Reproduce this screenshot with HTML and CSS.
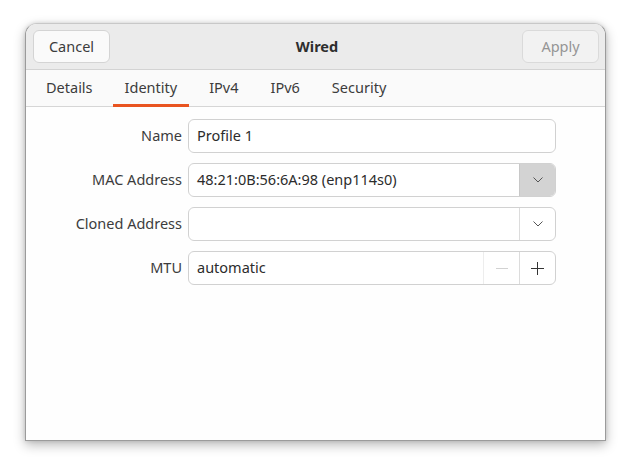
FILE: index.html
```html
<!DOCTYPE html>
<html>
<head>
<meta charset="utf-8">
<link rel="stylesheet" href="styles.css">
</head>
<body>
<div class="window">
  <header class="headerbar">
    <button class="btn">Cancel</button>
    <div class="title">Wired</div>
    <button class="btn btn-disabled">Apply</button>
  </header>
  <nav class="tabs">
    <div class="tab">Details</div>
    <div class="tab active">Identity</div>
    <div class="tab">IPv4</div>
    <div class="tab">IPv6</div>
    <div class="tab">Security</div>
  </nav>
  <main class="content">
    <div class="form">
      <label class="label">Name</label>
      <div class="field"><span class="value">Profile 1</span></div>

      <label class="label">MAC Address</label>
      <div class="field">
        <span class="value">48:21:0B:56:6A:98 (enp114s0)</span>
        <span class="side side-active">
          <svg width="10" height="6" viewBox="0 0 10 6"><path d="M0.5 0.5 L5 5 L9.5 0.5" fill="none" stroke="#555" stroke-width="1"/></svg>
        </span>
      </div>

      <label class="label">Cloned Address</label>
      <div class="field">
        <span class="value"></span>
        <span class="side">
          <svg width="10" height="6" viewBox="0 0 10 6"><path d="M0.5 0.5 L5 5 L9.5 0.5" fill="none" stroke="#555" stroke-width="1"/></svg>
        </span>
      </div>

      <label class="label">MTU</label>
      <div class="field">
        <span class="value">automatic</span>
        <span class="side side-light">
          <svg width="12" height="12" viewBox="0 0 12 12"><path d="M0 6.5 H12" stroke="#d2d2d2" stroke-width="1"/></svg>
        </span>
        <span class="side">
          <svg width="13" height="13" viewBox="0 0 13 13"><path d="M0 6.5 H13 M6.5 0 V13" stroke="#333" stroke-width="1"/></svg>
        </span>
      </div>
    </div>
  </main>
</div>
</body>
</html>
```

FILE: styles.css
```css
html, body {
  margin: 0;
  padding: 0;
  background: #ffffff;
}

body {
  padding: 23px 26px 28px 25px;
  font-family: "Noto Sans", "DejaVu Sans", sans-serif;
  font-size: 14.5px;
  color: #3c3c3c;
}

.window {
  width: 581px;
  height: 418px;
  box-sizing: border-box;
  border: 1px solid #9b9b9b;
  border-top-color: #c8c8c8;
  border-radius: 12px 12px 0 0;
  background: #fefefe;
  box-shadow: 0 4px 12px rgba(0, 0, 0, 0.28), 0 0 4px rgba(0, 0, 0, 0.12);
  display: flex;
  flex-direction: column;
  overflow: hidden;
}

.headerbar {
  height: 46px;
  flex: none;
  box-sizing: border-box;
  background: #ebebeb;
  border-bottom: 1px solid #d3d3d3;
  display: flex;
  align-items: flex-start;
  justify-content: space-between;
  padding: 6px 6px 0 7px;
}

.btn {
  font: inherit;
  color: #3c3c3c;
  height: 33px;
  width: 77px;
  box-sizing: border-box;
  background: #fafafa;
  border: 1px solid #d4d4d4;
  border-radius: 6px;
  padding: 0 0 1px;
}

.btn-disabled {
  color: #959595;
  background: #f2f2f2;
  border-color: #dadada;
}

.title {
  font-weight: bold;
  color: #2e2e2e;
  line-height: 32px;
  padding-left: 2px;
}

.tabs {
  height: 37px;
  flex: none;
  box-sizing: border-box;
  background: #fafafa;
  border-bottom: 1px solid #d6d6d6;
  display: flex;
  align-items: stretch;
  padding-left: 8px;
  gap: 8px;
}

.tab {
  padding: 0 12px;
  line-height: 34px;
  color: #3c3c3c;
  border-bottom: 3px solid transparent;
  margin-bottom: -1px;
}

.tab.active {
  border-bottom-color: #e95420;
}

.content {
  flex: 1;
  background: #fefefe;
  padding-top: 12px;
}

.form {
  display: grid;
  grid-template-columns: 107px 368px;
  column-gap: 6px;
  row-gap: 10px;
  justify-content: center;
}

.label {
  text-align: right;
  line-height: 33px;
  color: #3c3c3c;
  white-space: nowrap;
}

.field {
  height: 34px;
  box-sizing: border-box;
  border: 1px solid #d1d1d1;
  border-radius: 6px;
  background: #ffffff;
  display: flex;
  align-items: stretch;
  overflow: hidden;
}

.value {
  flex: 1;
  padding-left: 8px;
  line-height: 31px;
  color: #2c2c2c;
}

.side {
  width: 35px;
  flex: none;
  border-left: 1px solid #dcdcdc;
  display: flex;
  align-items: center;
  justify-content: center;
}

.side-active {
  background: #d3d3d3;
  border-left-color: #c8c8c8;
}

.side-light {
  border-left-color: #ededed;
}
```
